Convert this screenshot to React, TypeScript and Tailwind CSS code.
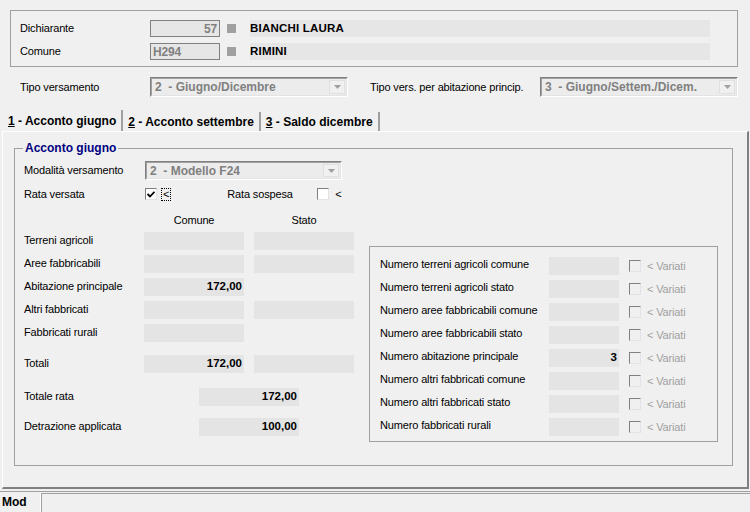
import React from 'react';

const leftRows = [
  { label: 'Terreni agricoli', comune: '', stato: '' as string | null },
  { label: 'Aree fabbricabili', comune: '', stato: '' },
  { label: 'Abitazione principale', comune: '172,00', stato: null },
  { label: 'Altri fabbricati', comune: '', stato: '' },
  { label: 'Fabbricati rurali', comune: '', stato: null },
];

const numRows = [
  { label: 'Numero terreni agricoli comune', value: '' },
  { label: 'Numero terreni agricoli stato', value: '' },
  { label: 'Numero aree fabbricabili comune', value: '' },
  { label: 'Numero aree fabbricabili stato', value: '' },
  { label: 'Numero abitazione principale', value: '3' },
  { label: 'Numero altri fabbricati comune', value: '' },
  { label: 'Numero altri fabbricati stato', value: '' },
  { label: 'Numero fabbricati rurali', value: '' },
];

function Combo({ text, width }: { text: string; width: string }) {
  return (
    <div className={`${width} h-full flex items-stretch border-t border-l border-t-[#808080] border-l-[#808080] border-b border-r border-b-white border-r-white`}>
      <div className="flex-1 flex items-stretch border-t border-l border-t-[#a0a0a0] border-l-[#a0a0a0] border-b border-r border-b-[#e3e3e3] border-r-[#e3e3e3] bg-[#ececec]">
        <span className="flex-1 pl-[3px] flex items-center font-bold text-[12px] text-[#808080] whitespace-pre tracking-normal">{text}</span>
        <div className="w-[16px] my-[1px] mr-[1px] flex items-center justify-center bg-[#f0f0f0] border border-[#e0e0e0]">
          <svg width="7" height="4" viewBox="0 0 7 4">
            <polygon points="0,0 7,0 3.5,4" fill="#a0a0a0" />
          </svg>
        </div>
      </div>
    </div>
  );
}

function CheckBox({ checked, disabled }: { checked?: boolean; disabled?: boolean }) {
  return (
    <div
      className={`w-[12px] h-[12px] border-t border-l border-b border-r border-t-[#808080] border-l-[#808080] border-b-[#e3e3e3] border-r-[#e3e3e3] flex items-center justify-center ${
        disabled ? 'bg-[#f0f0f0]' : 'bg-white'
      }`}
    >
      {checked && (
        <svg width="8" height="7" viewBox="0 0 8 7">
          <polyline points="0.5,3 3,5.5 7.5,0.8" fill="none" stroke="#000" strokeWidth="1.8" />
        </svg>
      )}
    </div>
  );
}

function Field({ value, width = 'w-[100px]' }: { value: string; width?: string }) {
  return (
    <div className={`${width} h-[18px] bg-[#e4e4e4] flex items-center justify-end pr-[2px] pb-[1px] font-bold text-[11.5px] text-black tracking-normal`}>
      {value}
    </div>
  );
}

export default function App() {
  return (
    <div
      className="w-[750px] h-[512px] overflow-hidden bg-[#f0f0f0] flex flex-col text-[11px] text-black tracking-[-0.15px]"
      style={{ fontFamily: '"Liberation Sans", Arial, sans-serif' }}
    >
      {/* dichiarante */}
      <div className="mt-[10px] ml-[10px] w-[728px] h-[57px] border border-[#a0a0a0] pt-[9px] pl-[9px] flex flex-col gap-[6px]">
        <div className="flex items-center h-[17px]">
          <span className="w-[130px]">Dichiarante</span>
          <div className="w-[70px] h-[17px] border border-[#808080] bg-[#e6e6e6] flex items-center justify-end pr-[2px] font-bold text-[12px] text-[#808080]">57</div>
          <div className="ml-[7px] w-[9px] h-[9px] bg-[#a0a0a0]" />
          <div className="ml-[14px] w-[460px] h-[17px] bg-[#e6e6e6] flex items-center font-bold text-[11.5px] tracking-[0.2px]">BIANCHI LAURA</div>
        </div>
        <div className="flex items-center h-[17px]">
          <span className="w-[130px]">Comune</span>
          <div className="w-[70px] h-[17px] border border-[#808080] bg-[#e6e6e6] flex items-center pl-[2px] font-bold text-[12px] text-[#808080]">H294</div>
          <div className="ml-[7px] w-[9px] h-[9px] bg-[#a0a0a0]" />
          <div className="ml-[14px] w-[460px] h-[17px] bg-[#e6e6e6] flex items-center font-bold text-[11.5px] tracking-[0.2px]">RIMINI</div>
        </div>
      </div>

      {/* tipo versamento */}
      <div className="mt-[10px] ml-[20px] h-[20px] flex items-center">
        <span className="w-[130px]">Tipo versamento</span>
        <Combo text="2  - Giugno/Dicembre" width="w-[198px]" />
        <span className="ml-[22px] w-[170px]">Tipo vers. per abitazione princip.</span>
        <Combo text="3  - Giugno/Settem./Dicem." width="w-[198px]" />
      </div>

      {/* tabs */}
      <div className="mt-[13px] ml-[3px] h-[21px] flex items-stretch font-bold text-[12px] tracking-normal">
        <div className="px-[5px] flex items-center border-r-2 border-r-[#a0a0a0]">
          <span><span className="underline">1</span> - Acconto giugno</span>
        </div>
        <div className="px-[5px] mt-[2px] flex items-center border-r-2 border-r-[#a0a0a0]">
          <span><span className="underline">2</span> - Acconto settembre</span>
        </div>
        <div className="px-[5px] mt-[2px] flex items-center border-r-2 border-r-[#a0a0a0]">
          <span><span className="underline">3</span> - Saldo dicembre</span>
        </div>
      </div>

      {/* tab page */}
      <div className="ml-[2px] w-[747px] h-[358px] border-t border-l border-t-white border-l-white border-r-2 border-b-2 border-r-[#808080] border-b-[#808080]">
        <fieldset className="mt-[9px] ml-[11px] w-[719px] h-[325px] border border-[#a0a0a0] pl-[9px]">
          <legend className="ml-[-1px] px-[2px] h-[14px] leading-[14px] font-bold text-[12px] text-[#000080] tracking-normal">Acconto giugno</legend>
          <div className="flex">
            {/* left column */}
            <div className="w-[330px] flex flex-col">
              <div className="mt-[6px] h-[19px] flex items-center">
                <span className="w-[121px]">Modalità versamento</span>
                <Combo text="2  - Modello F24" width="w-[197px]" />
              </div>
              <div className="mt-[7px] h-[14px] flex items-center">
                <span className="w-[121px]">Rata versata</span>
                <CheckBox checked />
                <span className="ml-[4px] px-[1px] leading-[11px] border border-dotted border-black">&lt;</span>
                <span className="ml-[56px] w-[90px]">Rata sospesa</span>
                <CheckBox />
                <span className="ml-[6px]">&lt;</span>
              </div>
              <div className="mt-[12px] h-[14px] flex items-center">
                <span className="w-[120px]" />
                <span className="w-[100px] text-center">Comune</span>
                <span className="ml-[10px] w-[100px] text-center">Stato</span>
              </div>
              <div className="mt-[5px] flex flex-col gap-[5px]">
                {leftRows.map((r) => (
                  <div key={r.label} className="h-[18px] flex items-center">
                    <span className="w-[120px] pb-[1px]">{r.label}</span>
                    <Field value={r.comune} />
                    {r.stato !== null && (
                      <div className="ml-[10px]">
                        <Field value={r.stato} />
                      </div>
                    )}
                  </div>
                ))}
              </div>
              <div className="mt-[13px] h-[18px] flex items-center">
                <span className="w-[120px] pb-[1px]">Totali</span>
                <Field value="172,00" />
                <div className="ml-[10px]">
                  <Field value="" />
                </div>
              </div>
              <div className="mt-[15px] h-[18px] flex items-center">
                <span className="w-[175px] pb-[1px]">Totale rata</span>
                <Field value="172,00" />
              </div>
              <div className="mt-[12px] h-[18px] flex items-center">
                <span className="w-[175px] pb-[1px]">Detrazione applicata</span>
                <Field value="100,00" />
              </div>
            </div>

            {/* right box */}
            <div className="ml-[15px] mt-[91px] w-[349px] h-[196px] border border-[#a0a0a0] pt-[10px] pl-[10px] flex flex-col gap-[5px]">
              {numRows.map((r) => (
                <div key={r.label} className="h-[18px] flex items-center">
                  <span className="w-[169px] pb-[3px]">{r.label}</span>
                  <Field value={r.value} width="w-[70px]" />
                  <div className="ml-[10px]">
                    <CheckBox disabled />
                  </div>
                  <span className="ml-[6px] text-[#a0a0a0]">&lt; Variati</span>
                </div>
              ))}
            </div>
          </div>
        </fieldset>
      </div>

      {/* status bar */}
      <div className="mt-[2px] flex-1 flex border-t border-t-[#a0a0a0]">
        <div className="w-[41px] pl-[2px] flex items-center font-bold text-[12px] tracking-normal border-r border-r-white">Mod</div>
        <div className="flex-1 border-l border-t border-l-[#a0a0a0] border-t-[#a0a0a0] mt-[1px]" />
      </div>
    </div>
  );
}
